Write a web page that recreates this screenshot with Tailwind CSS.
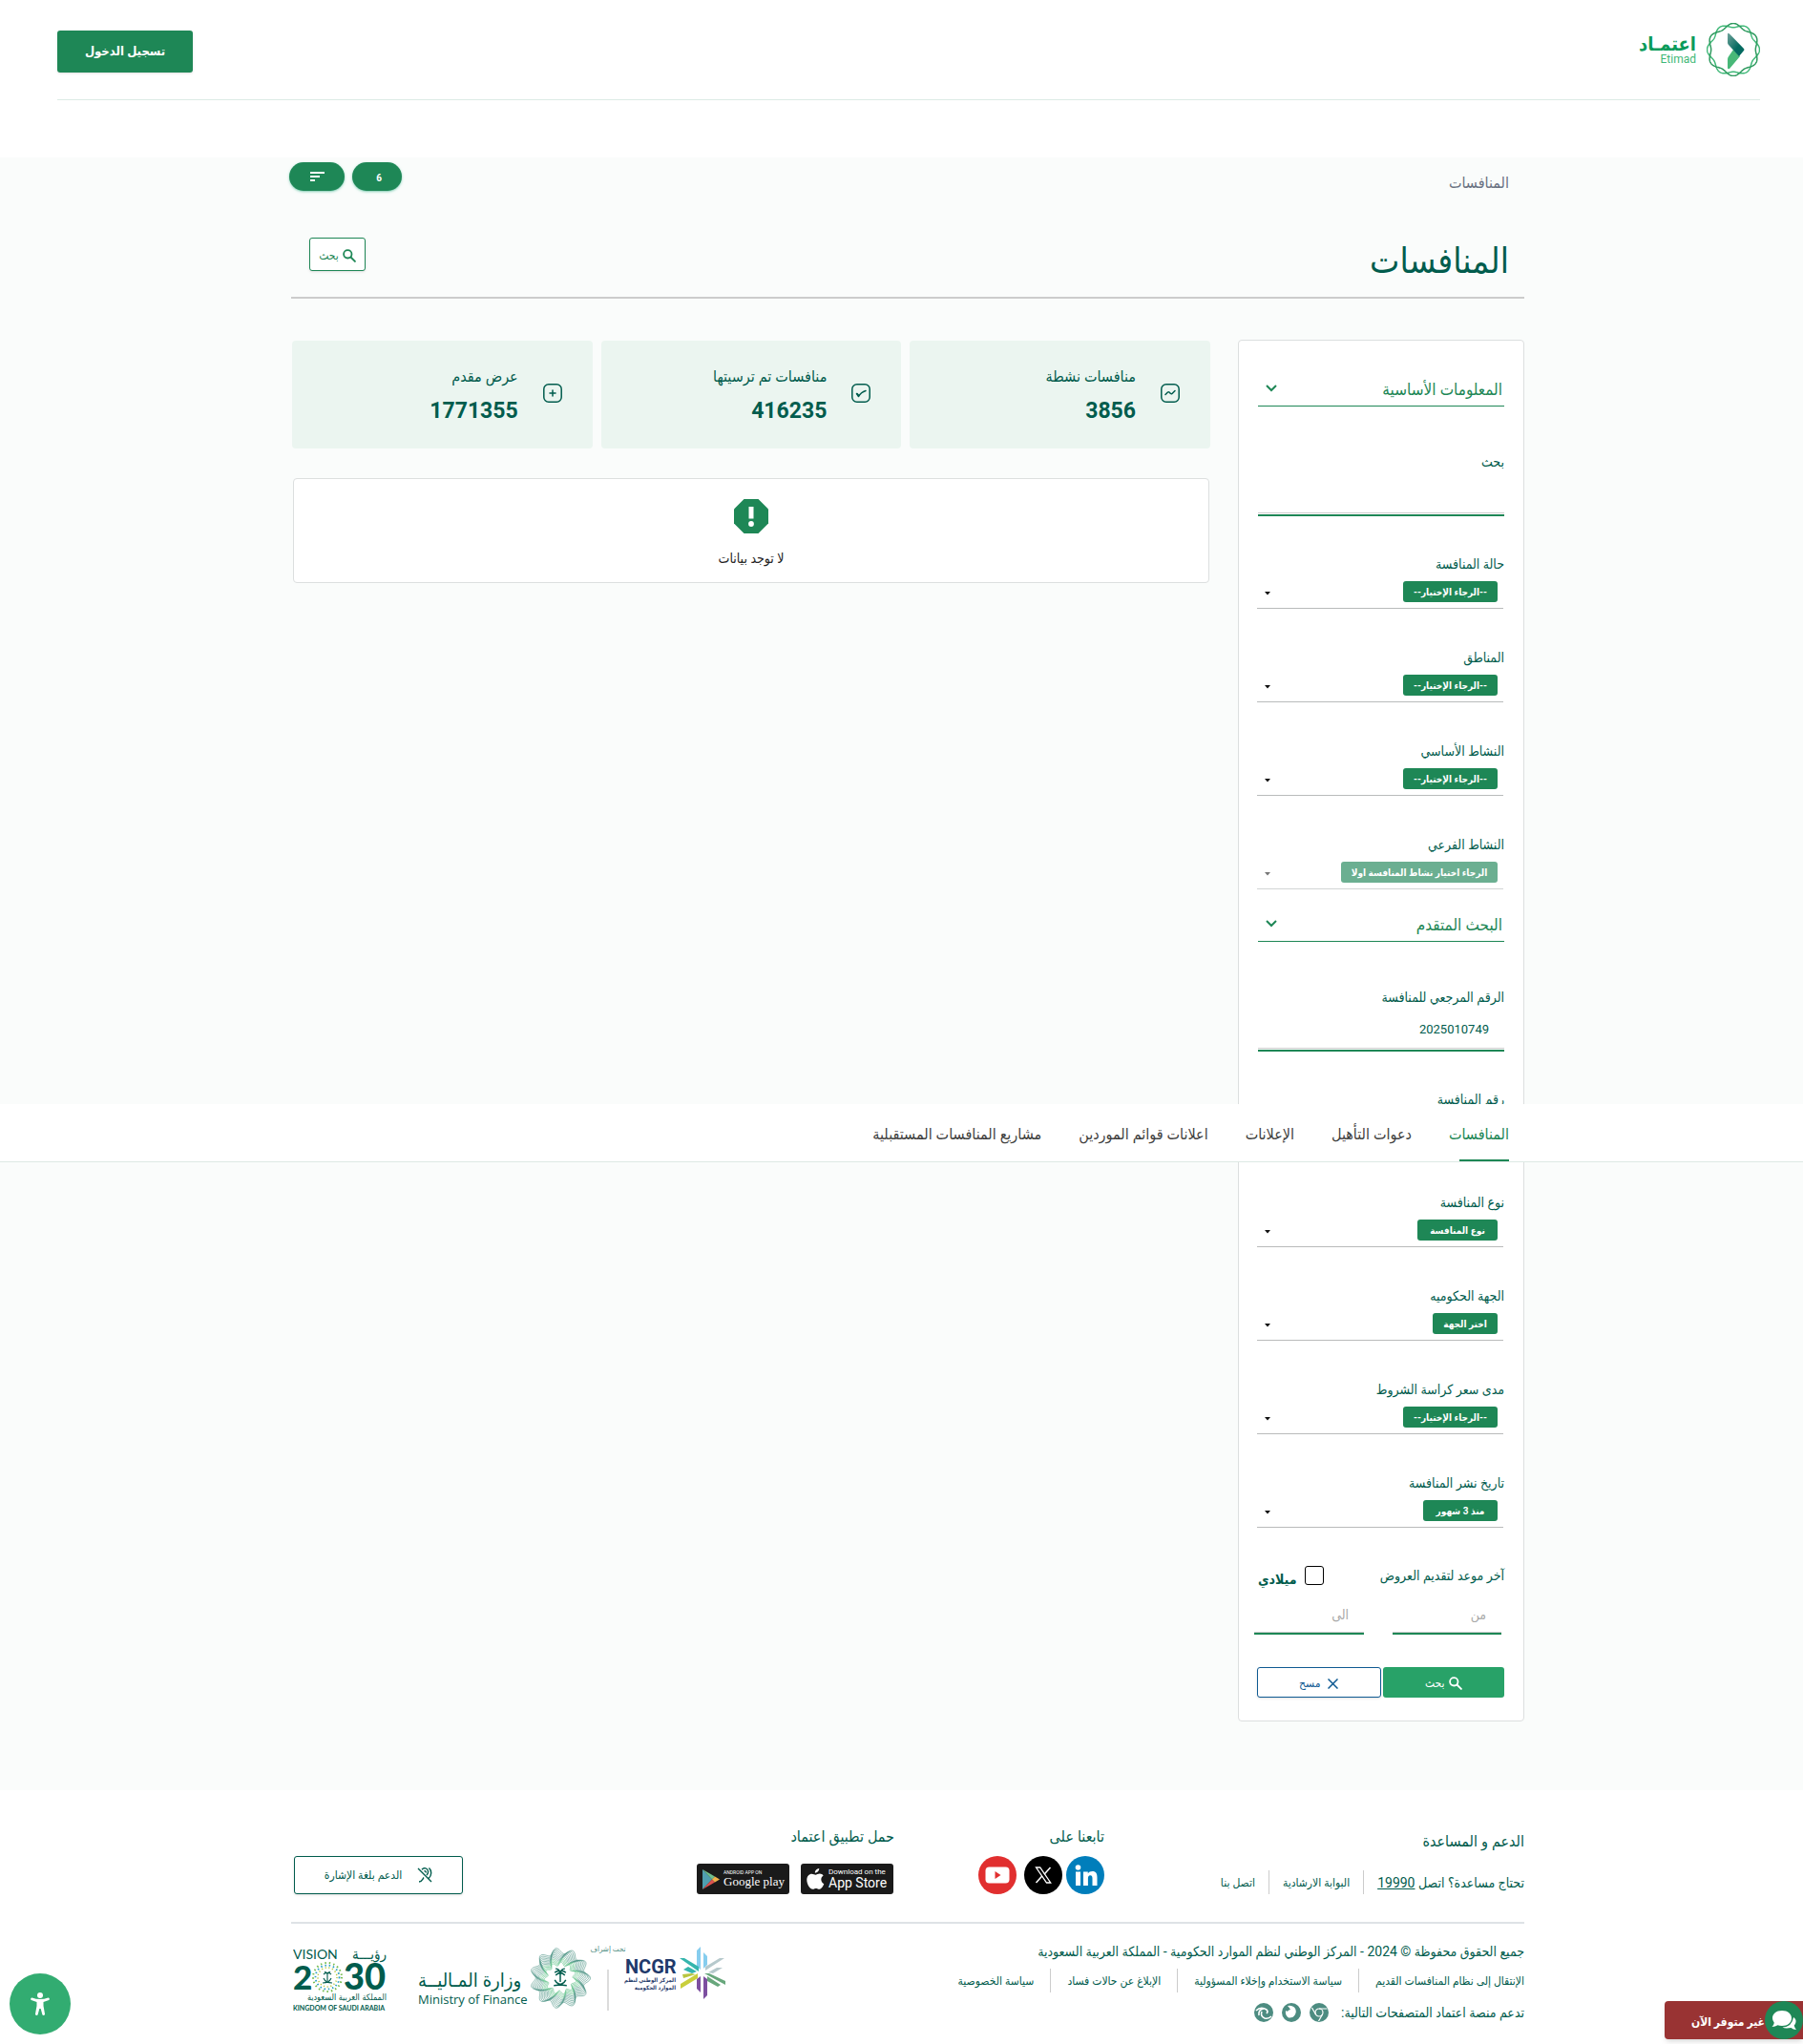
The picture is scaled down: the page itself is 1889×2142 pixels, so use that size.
<!DOCTYPE html>
<html lang="ar" dir="rtl">
<head>
<meta charset="utf-8">
<title>المنافسات - اعتماد</title>
<script src="https://cdn.jsdelivr.net/npm/@tailwindcss/browser@4"></script>
</head>
<body class="relative bg-white text-[#015c4d] font-['Roboto','DejaVu_Sans_Condensed','DejaVu_Sans',sans-serif] text-sm leading-5">

<header class="h-[165px] pr-[45px] pl-[60px]">
  <div class="flex h-[105px] items-start justify-between border-b border-[#dcebe5]">
    <a href="#" class="mt-6 flex items-center gap-[11px]">
      <svg class="size-14" viewBox="-28 -28 56 56" fill="none" aria-hidden="true">
        <path data-n="6" data-r="25.4" data-a="2.1" data-p="0" stroke="#3fb877" stroke-width="1.5"/>
        <path data-n="6" data-r="25.4" data-a="2.1" data-p="3.1416" stroke="#2f9a5f" stroke-width="1.5"/>
        <path d="M-6 19V10q0-2 1.500-3.500L0 0l7 7L-4 20q-2 1-2-1Z" fill="#48b878"/>
        <path d="M-6-16q0-2 2-.5L11-1q1 1 0 2L6 7-5-5q-1-1-1-2.500Z" fill="url(#eg)"/>
        <defs><linearGradient id="eg" x1="0" y1="0" x2="1" y2="1"><stop stop-color="#6fa29a"/><stop offset=".6" stop-color="#046a60"/></linearGradient></defs>
      </svg>
      <span class="flex flex-col items-start font-bold text-[#0b9b5b]">
        <span class="text-[20px] leading-5">اعتمـاد</span>
        <span class="text-xs leading-3 font-normal text-[#3fb877]" dir="ltr">Etimad</span>
      </span>
    </a>
    <button class="mt-8 h-11 w-[142px] rounded-[3px] bg-[#1e8756] text-[13px] font-bold text-white shadow">تسجيل الدخول</button>
  </div>
</header>

<section class="bg-[#fafcfb] pt-[5px] pb-[72px] pl-[13px]">
  <div class="mx-auto max-w-[1292px]">
    <div class="flex h-[30px] items-center justify-between">
      <span class="pt-3.5 pr-4 text-base leading-5 text-gray-500">المنافسات</span>
      <div class="-ml-0.5 flex gap-2 text-white">
        <button class="h-[30px] w-[52px] rounded-full bg-[#1e8756] pt-1 pl-1 text-[10px] font-bold shadow shadow-emerald-600/40">6</button>
        <button class="flex h-[30px] w-[58px] items-center justify-center rounded-full bg-[#1e8756] shadow shadow-emerald-600/40" aria-label="ترتيب">
          <svg class="h-[10px] w-[15px]" viewBox="0 0 15 10" fill="currentColor"><path d="M0 0h15v2H0zM0 4h10v2H0zM0 8h5v2H0z"/></svg>
        </button>
      </div>
    </div>
    <div class="flex h-[113px] items-start justify-between border-b-2 border-[#ccc]">
      <h1 class="mt-[54px] pr-4 text-[37px] leading-10">المنافسات</h1>
      <button class="mt-[49px] ml-[19px] flex h-[35px] w-[59px] items-center justify-center gap-1 rounded-[3px] border border-[#1e8756] bg-white pt-0.5 text-xs text-[#1e8756] shadow">
        <svg class="size-[14px]" viewBox="0 0 14 14" fill="none" stroke="currentColor" stroke-width="1.8"><circle cx="5.3" cy="5.3" r="4.2"/><path d="m8.5 8.5 5 5"/></svg>
        بحث
      </button>
    </div>

    <div class="mt-[43px] flex items-start">
      <aside class="w-[300px] shrink-0 rounded border border-[#dcdfdf] bg-white px-5 pt-[29px] pb-6">
        <form>
          <h2 class="flex h-10 items-center justify-between border-b border-[#1e8756] pt-1 pr-0.5 pl-2 text-[17px] text-[#1e8756]">المعلومات الأساسية
            <svg class="mb-0.5 h-2 w-3" viewBox="0 0 12 8" fill="none" stroke="currentColor" stroke-width="2"><path d="m1 1 5 5 5-5"/></svg></h2>
          <label for="q" class="mt-12 block h-5">بحث</label>
          <div class="border-b-2 border-[#1e8756] pb-px"><input id="q" class="block h-11 w-full border-b border-[#ccc] px-4 outline-none"></div>

          <label for="s1" class="mt-10 block h-5">حالة المنافسة</label>
          <div class="mr-px -ml-px flex items-center justify-between border-b border-[#b9bbbb] pt-2 pr-1.5 pb-1.5 pl-2">
            <select id="s1" class="h-[22px] w-[99px] appearance-none rounded-[3px] bg-[#1e8756] pt-0.5 text-center text-[10px] font-bold text-white"><option>--الرجاء الإختيار--</option></select>
            <svg class="mt-1 h-1 w-1.5" viewBox="0 0 6 4"><path d="M0 0h6L3 3.500z" fill="#111"/></svg>
          </div>
          <label for="s2" class="mt-[41px] block h-5">المناطق</label>
          <div class="mr-px -ml-px flex items-center justify-between border-b border-[#b9bbbb] pt-2 pr-1.5 pb-1.5 pl-2">
            <select id="s2" class="h-[22px] w-[99px] appearance-none rounded-[3px] bg-[#1e8756] pt-0.5 text-center text-[10px] font-bold text-white"><option>--الرجاء الإختيار--</option></select>
            <svg class="mt-1 h-1 w-1.5" viewBox="0 0 6 4"><path d="M0 0h6L3 3.500z" fill="#111"/></svg>
          </div>
          <label for="s3" class="mt-[41px] block h-5">النشاط الأساسي</label>
          <div class="mr-px -ml-px flex items-center justify-between border-b border-[#b9bbbb] pt-2 pr-1.5 pb-1.5 pl-2">
            <select id="s3" class="h-[22px] w-[99px] appearance-none rounded-[3px] bg-[#1e8756] pt-0.5 text-center text-[10px] font-bold text-white"><option>--الرجاء الإختيار--</option></select>
            <svg class="mt-1 h-1 w-1.5" viewBox="0 0 6 4"><path d="M0 0h6L3 3.500z" fill="#111"/></svg>
          </div>
          <label for="s4" class="mt-[41px] block h-5">النشاط الفرعي</label>
          <div class="mr-px -ml-px flex items-center justify-between border-b border-[#d2d4d4] pt-2 pr-1.5 pb-1.5 pl-2">
            <select id="s4" disabled class="h-[22px] w-[164px] appearance-none rounded-[3px] bg-[#6baf91] pt-0.5 text-center text-[10px] font-bold text-white opacity-100"><option>الرجاء اختيار نشاط المنافسة اولا</option></select>
            <svg class="mt-1 h-1 w-1.5" viewBox="0 0 6 4"><path d="M0 0h6L3 3.500z" fill="#777"/></svg>
          </div>

          <h2 class="mt-[15px] flex h-10 items-center justify-between border-b border-[#1e8756] pt-1 pr-0.5 pl-2 text-[17px] text-[#1e8756]">البحث المتقدم
            <svg class="mb-0.5 h-2 w-3" viewBox="0 0 12 8" fill="none" stroke="currentColor" stroke-width="2"><path d="m1 1 5 5 5-5"/></svg></h2>
          <label for="ref" class="mt-12 block h-5">الرقم المرجعي للمنافسة</label>
          <div class="border-b-2 border-[#1e8756] pb-px"><input id="ref" value="2025010749" class="block h-11 w-full border-b border-[#ccc] px-4 pt-1 text-[13px] outline-none"></div>
          <label for="num" class="mt-10 block h-5">رقم المنافسة</label>
          <div class="border-b-2 border-[#1e8756] pb-px"><input id="num" class="block h-11 w-full border-b border-[#ccc] px-4 outline-none"></div>

          <label for="s5" class="mt-[41px] block h-5">نوع المنافسة</label>
          <div class="mr-px -ml-px flex items-center justify-between border-b border-[#b9bbbb] pt-2 pr-1.5 pb-1.5 pl-2">
            <select id="s5" class="h-[22px] w-[84px] appearance-none rounded-[3px] bg-[#1e8756] pt-0.5 text-center text-[10px] font-bold text-white"><option>نوع المنافسة</option></select>
            <svg class="mt-1 h-1 w-1.5" viewBox="0 0 6 4"><path d="M0 0h6L3 3.500z" fill="#111"/></svg>
          </div>
          <label for="s6" class="mt-[41px] block h-5">الجهة الحكوميه</label>
          <div class="mr-px -ml-px flex items-center justify-between border-b border-[#b9bbbb] pt-2 pr-1.5 pb-1.5 pl-2">
            <select id="s6" class="h-[22px] w-[68px] appearance-none rounded-[3px] bg-[#1e8756] pt-0.5 text-center text-[10px] font-bold text-white"><option>اختر الجهة</option></select>
            <svg class="mt-1 h-1 w-1.5" viewBox="0 0 6 4"><path d="M0 0h6L3 3.500z" fill="#111"/></svg>
          </div>
          <label for="s7" class="mt-[41px] block h-5">مدى سعر كراسة الشروط</label>
          <div class="mr-px -ml-px flex items-center justify-between border-b border-[#b9bbbb] pt-2 pr-1.5 pb-1.5 pl-2">
            <select id="s7" class="h-[22px] w-[99px] appearance-none rounded-[3px] bg-[#1e8756] pt-0.5 text-center text-[10px] font-bold text-white"><option>--الرجاء الإختيار--</option></select>
            <svg class="mt-1 h-1 w-1.5" viewBox="0 0 6 4"><path d="M0 0h6L3 3.500z" fill="#111"/></svg>
          </div>
          <label for="s8" class="mt-[41px] block h-5">تاريخ نشر المنافسة</label>
          <div class="mr-px -ml-px flex items-center justify-between border-b border-[#b9bbbb] pt-2 pr-1.5 pb-1.5 pl-2">
            <select id="s8" class="h-[22px] w-[78px] appearance-none rounded-[3px] bg-[#1e8756] pt-0.5 text-center text-[10px] font-bold text-white"><option>منذ 3 شهور</option></select>
            <svg class="mt-1 h-1 w-1.5" viewBox="0 0 6 4"><path d="M0 0h6L3 3.500z" fill="#111"/></svg>
          </div>

          <div class="mt-10 flex h-6 items-start justify-between">
            <label for="from">آخر موعد لتقديم العروض</label>
            <label class="flex items-start gap-2 font-bold"><input type="checkbox" class="size-5 appearance-none rounded-[3px] border border-black bg-white"><span class="pt-1">ميلادي</span></label>
          </div>
          <div class="-ml-1 flex justify-between pr-[3px]">
            <div class="mt-2 w-[114px] border-b-2 border-[#1e8756]"><input id="from" placeholder="من" class="block h-[38px] w-full border-b border-[#ccc] px-4 outline-none placeholder:text-[#a9a9a9]"></div>
            <div class="mt-2 w-[115px] border-b-2 border-[#1e8756]"><input aria-label="الى" placeholder="الى" class="block h-[38px] w-full border-b border-[#ccc] px-4 outline-none placeholder:text-[#a9a9a9]"></div>
          </div>
          <div class="mt-[34px] -ml-px flex gap-0.5 text-xs">
            <button type="button" class="flex h-8 flex-1 items-center justify-center gap-1 rounded-[3px] bg-[#28a268] pt-0.5 text-white">
              <svg class="size-[14px]" viewBox="0 0 14 14" fill="none" stroke="currentColor" stroke-width="1.8"><circle cx="5.300" cy="5.300" r="4.200"/><path d="m8.500 8.500 5 5"/></svg>بحث</button>
            <button type="button" class="flex h-8 flex-1 items-center justify-center gap-2 rounded-[3px] border border-[#0f5a92] bg-white pt-0.5 text-[#0f5a92] shadow-sm">
              <svg class="size-[11px]" viewBox="0 0 11 11" fill="none" stroke="currentColor" stroke-width="1.500"><path d="m.5.5 10 10m0-10-10 10"/></svg>مسح</button>
          </div>
        </form>
      </aside>

      <main class="mt-px mr-[29px] ml-px flex-1">
        <div class="grid grid-cols-3 gap-[9px]">
          <div class="flex h-[113px] items-start gap-[26px] rounded bg-[#ebf5f0] pr-8">
            <svg class="mt-[45px] size-5" viewBox="0 0 20 20" fill="none" stroke="currentColor" stroke-width="1.500" stroke-linecap="round" stroke-linejoin="round"><rect x=".8" y=".8" width="18.400" height="18.400" rx="5"/><path d="m5 11.500 2.500-2.500q.8-.6 1.500 0l1.500 1.500q.8.600 1.500 0L15 7.500"/></svg>
            <div><div class="mt-7 text-base leading-5">منافسات نشطة</div><div class="mt-2 text-[23px] leading-9 font-bold">3856</div></div>
          </div>
          <div class="flex h-[113px] items-start gap-[26px] rounded bg-[#ebf5f0] pr-8">
            <svg class="mt-[45px] size-5" viewBox="0 0 20 20" fill="none" stroke="currentColor" stroke-width="1.500" stroke-linecap="round" stroke-linejoin="round"><rect x=".8" y=".8" width="18.400" height="18.400" rx="5"/><path d="m5.500 10.500 2 3Q10 9 15 7.500"/><path d="m6 10.500 2 2"/></svg>
            <div><div class="mt-7 text-base leading-5">منافسات تم ترسيتها</div><div class="mt-2 text-[23px] leading-9 font-bold">416235</div></div>
          </div>
          <div class="flex h-[113px] items-start gap-[26px] rounded bg-[#ebf5f0] pr-8">
            <svg class="mt-[45px] size-5" viewBox="0 0 20 20" fill="none" stroke="currentColor" stroke-width="1.500" stroke-linecap="round"><rect x=".8" y=".8" width="18.400" height="18.400" rx="5"/><path d="M10 7v6M7 10h6"/></svg>
            <div><div class="mt-7 text-base leading-5">عرض مقدم</div><div class="mt-2 text-[23px] leading-9 font-bold">1771355</div></div>
          </div>
        </div>
        <div class="mx-px mt-[31px] flex h-[110px] flex-col items-center rounded border border-[#dcdfdf] bg-white pt-[21px] text-[#222]">
          <svg class="size-9" viewBox="0 0 36 36"><path d="M10.500 0h15L36 10.500v15L25.500 36h-15L0 25.500v-15z" fill="#1e8756"/><rect x="15.500" y="8" width="5" height="12.500" fill="#fff"/><circle cx="18" cy="26" r="2.900" fill="#fff"/></svg>
          <p class="mt-4">لا توجد بيانات</p>
        </div>
      </main>
    </div>
  </div>
</section>

<nav class="absolute inset-x-0 top-[1157px] h-[61px] border-b border-[#dde9e4] bg-white pl-[13px]">
  <div class="mx-auto flex h-full max-w-[1292px] gap-[39px] pr-4 text-base leading-5 text-[#3f4140]">
    <a href="#" class="relative pt-[22px] text-[#1e8756]">المنافسات<span class="absolute right-0 bottom-0 h-0.5 w-[52px] bg-[#1e8756]"></span></a>
    <a href="#" class="pt-[22px]">دعوات التأهيل</a>
    <a href="#" class="pt-[22px]">الإعلانات</a>
    <a href="#" class="pt-[22px]">اعلانات قوائم الموردين</a>
    <a href="#" class="pt-[22px]">مشاريع المنافسات المستقبلية</a>
  </div>
</nav>

<footer class="pl-[13px]">
  <div class="mx-auto max-w-[1292px]">
    <div class="grid grid-cols-[440px_220px_1fr_auto] border-b-2 border-[#dee2e6] pt-[39px] pb-[29px]">
      <div>
        <h3 class="mt-[5px] text-base leading-5">الدعم و المساعدة</h3>
        <div class="mt-5 flex h-[25px] items-center text-xs">
          <span class="pl-[14px] text-sm">تحتاج مساعدة؟ اتصل <a href="tel:19990" class="underline">19990</a></span>
          <a href="#" class="flex h-full items-center border-r border-[#ccc] px-[14px]">البوابة الارشادية</a>
          <a href="#" class="flex h-full items-center border-r border-[#ccc] px-[14px]">اتصل بنا</a>
        </div>
      </div>
      <div>
        <h3 class="text-base leading-5">تابعنا على</h3>
        <div class="mt-2.5 flex">
          <a href="#" aria-label="LinkedIn"><svg class="size-10" viewBox="0 0 40 40"><circle cx="20" cy="20" r="20" fill="#007ebb"/><g fill="#fff"><circle cx="12.500" cy="12" r="2.800"/><path d="M10 16.500h5V31h-5zM18 16.500h4.800v2c1-1.600 2.700-2.400 4.600-2.400 4 0 5.100 2.600 5.100 6.400V31h-5v-7.500c0-2-.5-3.300-2.200-3.300-1.800 0-2.400 1.400-2.400 3.300V31H18z"/></g></svg></a>
          <a href="#" aria-label="X" class="mr-1"><svg class="size-10" viewBox="0 0 40 40"><circle cx="20" cy="20" r="20" fill="#000"/><path d="M12.500 12h4.200l11 16h-4.200z" fill="none" stroke="#fff" stroke-width="1.300"/><path d="m27.500 12-6.500 7.200M18.800 21 12.500 28" stroke="#fff" stroke-width="1.500"/></svg></a>
          <a href="#" aria-label="YouTube" class="mr-2"><svg class="size-10" viewBox="0 0 40 40"><circle cx="20" cy="20" r="20" fill="#e12f2f"/><rect x="7.500" y="11.500" width="25" height="17" rx="4" fill="#fff"/><path d="m17.500 16 6 4-6 4z" fill="#e12f2f"/></svg></a>
        </div>
      </div>
      <div>
        <h3 class="text-base leading-5">حمل تطبيق اعتماد</h3>
        <div class="mt-[18px] mr-px flex gap-3 text-white">
          <a href="#" dir="ltr" class="flex h-8 w-[97px] items-center gap-1 rounded-[3px] bg-[#1a1a1a] pl-1.5">
            <svg class="h-[22px] w-[19px]" viewBox="0 0 19 22" fill="#fff"><path d="M13.200 0c.2 2.500-2 4.700-4.300 4.700C8.600 2.400 10.900.2 13.200 0zM18.300 16.200C17.200 19 15.400 21.800 13.300 21.800c-1.300 0-1.800-.8-3.400-.8s-2.100.8-3.400.8C3.700 21.800.3 16.700.3 12 .3 8.100 2.800 5.700 5.500 5.700c1.600 0 2.900 1 4 1 1 0 2.500-1.100 4.400-1.100 1.400 0 2.800.7 3.700 1.900-3.500 2.100-2.700 7.200.7 8.700z"/></svg>
            <span class="flex flex-col"><span class="text-[8px] leading-2 whitespace-nowrap">Download on the</span><span class="text-[14px] leading-[14px] whitespace-nowrap">App Store</span></span>
          </a>
          <a href="#" dir="ltr" class="flex h-8 w-[97px] items-center gap-1 rounded-[3px] bg-[#1a1a1a] pl-1.5">
            <svg class="h-[21px] w-[18px]" viewBox="0 0 18 21"><path d="M0 0v21L10 10.500z" fill="#4f9fb0"/><path d="M0 0 13 7.500l-3 3z" fill="#6fbf8b"/><path d="M0 21l13-7.500-3-3z" fill="#d9534f"/><path d="m13 7.500 5 3-5 3-3-3z" fill="#f0b14a"/></svg>
            <span class="flex flex-col"><span class="text-[5px] leading-1.5 whitespace-nowrap">ANDROID APP ON</span><span class="font-['Liberation_Serif',serif] text-[13px] leading-[14px] whitespace-nowrap">Google play</span></span>
          </a>
        </div>
      </div>
      <div class="pt-[30px] pl-[3px]">
        <button class="flex h-10 w-[177px] items-center justify-center gap-4 rounded-[3px] border border-[#015c4d] bg-white text-xs shadow-sm">
          <svg class="size-4" viewBox="0 0 16 16" fill="none" stroke="currentColor" stroke-width="1.400"><path d="M1 1l14 14M5 2.200C7-.2 11 .6 11.500 4c.3 2.200-.8 3-1.500 4.200M7.500 4c1.200-.6 2 .5 1.500 1.500M12.500.5c3 3 3 8-.5 11M2 15c3 0 3.500-2.500 5-4.500"/></svg>
          الدعم بلغة الإشارة</button>
      </div>
    </div>

    <div class="flex items-start justify-between pt-[19px] pb-[23px]">
      <div>
        <p>جميع الحقوق محفوظة © 2024 - المركز الوطني لنظم الموارد الحكومية - المملكة العربية السعودية</p>
        <div class="mt-2 flex h-[25px] text-xs">
          <a href="#" class="flex items-center pl-[17px]">الإنتقال إلى نظام المنافسات القديم</a>
          <a href="#" class="flex items-center border-r border-[#ccc] px-[17px]">سياسة الاستخدام وإخلاء المسؤولية</a>
          <a href="#" class="flex items-center border-r border-[#ccc] px-[17px]">الإبلاغ عن حالات فساد</a>
          <a href="#" class="flex items-center border-r border-[#ccc] px-[17px]">سياسة الخصوصية</a>
        </div>
        <div class="mt-[11px] flex h-5 items-center gap-[9px]"><span class="pl-1">تدعم منصة اعتماد المتصفحات التالية:</span>
          <svg class="size-5" viewBox="0 0 20 20"><circle cx="10" cy="10" r="10" fill="#4d8c81"/><g fill="none" stroke="#fff" stroke-width="1.200"><circle cx="10" cy="10" r="4"/><path d="M10 6h8.500M6.500 12 2.500 5M13.500 12 9.500 19"/></g></svg>
          <svg class="size-5" viewBox="0 0 20 20"><circle cx="10" cy="10" r="10" fill="#4d8c81"/><path d="M6 3q4-1 7 1.500Q16 8 14 12t-7 3.500Q3 13 4 8q1 1 2 .8 1-1.800 3-1.800Q8 5 6 3z" fill="#fff"/></svg>
          <svg class="size-5" viewBox="0 0 20 20"><circle cx="10" cy="10" r="10" fill="#4d8c81"/><path d="M2 8q5-5 11-1 2 2 0 4M8 9q-2 5 3 7 4 1 7-2M5 13Q4 7 10 6" fill="none" stroke="#fff" stroke-width="1.600"/></svg>
        </div>
      </div>

      <div class="flex items-start pl-0.5" dir="ltr">
        <svg class="mt-1 h-[71px] w-[102px]" viewBox="0 0 102 71" role="img" aria-label="رؤية 2030">
          <g fill="#015c4d" font-family="Lato, Roboto, sans-serif">
            <text x="0" y="14" font-size="14">VISION</text>
            <text x="98" y="14" font-size="15" font-family="DejaVu Sans Condensed, DejaVu Sans, sans-serif" direction="rtl">رؤيـــة</text>
            <text x="0" y="46" font-size="35" font-weight="900">2</text>
            <text x="53" y="46" font-size="38" font-weight="900">30</text>
            <text x="98" y="57" font-size="9" font-family="DejaVu Sans Condensed, DejaVu Sans, sans-serif" direction="rtl">المملكة العربية السعودية</text>
            <text x="0" y="68" font-size="7" font-weight="700">KINGDOM OF SAUDI ARABIA</text>
          </g>
          <g transform="translate(36 33)" fill="none">
            <circle r="15" stroke="#74bb4b" stroke-width="2" stroke-dasharray="1.500 3"/><circle r="12.500" stroke="#2a9fc4" stroke-width="1.800" stroke-dasharray="1.500 2.800"/><circle r="10" stroke="#b8c93c" stroke-width="1.500" stroke-dasharray="1.200 2.500"/>
            <path d="M0 4v-8M-4-3q2-2 4-1 2-1 4 1M0-4q-2-2-3-1M0-4q2-2 3-1M-5 6Q2 6 4 1M5 6Q-2 6-4 1" stroke="#015c4d" stroke-width="1.100"/>
          </g>
        </svg>
        <div class="mt-7 ml-[29px] w-[113px]">
          <div class="text-[20px] leading-6 whitespace-nowrap">وزارة المـاليــة</div>
          <div class="font-['Open_Sans',sans-serif] text-[13px] leading-4 whitespace-nowrap">Ministry of Finance</div>
        </div>
        <svg class="mt-[5px] ml-1 h-[66px] w-16" viewBox="-33 -33 66 66" fill="none" stroke-width=".6" aria-hidden="true">
          <g id="rosette"></g>
          <path d="M0 4V-8M-6-6q3-3 6-1 3-2 6 1M0-7q-3-4-5-3M0-7q3-4 5-3M-5-3q3-3 5-3 2 0 5 3M-7 8Q3 8 6 2M7 8Q-3 8-6 2" stroke="#015c4d" stroke-width="1.500"/>
        </svg>
        <div class="flex w-[36px] flex-col items-center text-[8px] leading-2 whitespace-nowrap text-[#4d8c81]"><span class="mt-1">تحت إشراف</span><span class="mt-[17px] h-[43px] w-0.5 bg-[#dcdcdc]"></span></div>
        <div class="mt-4 w-[53px] text-[#1f3a6b]">
          <div class="text-xl leading-5 font-bold">NCGR</div>
          <div class="text-[6px] leading-2 font-bold whitespace-nowrap" dir="rtl">المركز الوطني لنظم<br>الموارد الحكومية</div>
        </div>
        <svg class="mt-[5px] ml-1 h-[55px] w-12" viewBox="0 0 48 55" aria-hidden="true">
          <path d="M18 4l4-4v24l-4-3z" fill="#86cdee"/><path d="M25 6l4 4v9l-4 4z" fill="#86cdee"/>
          <path d="M0 12h5l15 9v5z" fill="#35b5ad"/><path d="M4 24l5-3 9 5-5 2z" fill="#35b5ad"/>
          <path d="M47 12h-5L27 21v4z" fill="#b6c9cc"/><path d="M45 22l-6 0-9 5 5 1z" fill="#b6c9cc"/>
          <path d="M1 44v-5l18-11 0 5z" fill="#c9cf3c"/><path d="M4 33l-1-4 9-1 5 1z" fill="#b9c540"/>
          <path d="M25 55l4-4V34l-4-3z" fill="#7d4fa0"/><path d="M18 44l4 4V31l-4 3z" fill="#7d4fa0"/>
          <path d="M48 40v-4L31 28h-5z" fill="#68a77c"/><path d="M40 42l3-2-14-9v5z" fill="#68a77c"/>
        </svg>
      </div>
    </div>
  </div>
</footer>

<button class="absolute top-[2068px] left-2.5 flex size-16 items-center justify-center rounded-full bg-[#32ac71]" aria-label="إمكانية الوصول">
  <svg class="h-6 w-5" viewBox="0 0 20 24" fill="#fff"><circle cx="10" cy="3" r="3"/><path d="M1.500 5.500Q10 8.500 18.500 5.500a1.300 1.300 0 0 1 .7 2.400L13.500 10v4l1.500 8.500a1.400 1.400 0 0 1-2.700.6L10.700 17H9.300l-1.600 6.100A1.400 1.400 0 0 1 5 22.500L6.500 14v-4L.8 7.900a1.300 1.300 0 0 1 .7-2.400z"/></svg>
</button>
<button class="absolute top-[2097px] right-0 flex h-10 w-[145px] items-center rounded-l bg-[#993333] text-xs font-bold text-white shadow-md">
  <svg class="size-10 shrink-0" viewBox="0 0 40 40"><circle cx="20" cy="20" r="20" fill="#1e8756"/><path d="M18 10c6 0 10 3.500 10 8s-4 8-10 8q-2.500 0-4.500-.8Q11 27 7.500 27q2-2 2.300-4.300Q8 20.500 8 18c0-4.500 4-8 10-8z" fill="#fff"/><path d="M30 17q3 2 2.500 5-.3 2-1.800 3.500.5 2.500 2.300 4.500-3.500 0-5.500-2Q21 29 18.500 27.500 28.500 27 30 17z" fill="#fff"/></svg>
  <span class="pt-1 whitespace-nowrap">غير متوفر الآن</span>
</button>

<script>
  // Closed wavy ring: radius r, wave height a, n waves, phase p.
  function ring(n, r, a, p) {
    let d = '';
    for (let i = 0; i < 240; i++) {
      const t = i / 240 * 2 * Math.PI, q = r + a * Math.cos(n * t + p);
      d += (i ? 'L' : 'M') + (q * Math.cos(t)).toFixed(2) + ' ' + (q * Math.sin(t)).toFixed(2);
    }
    return d + 'Z';
  }
  document.querySelectorAll('path[data-n]').forEach(e => e.setAttribute('d', ring(+e.dataset.n, +e.dataset.r, +e.dataset.a, +e.dataset.p)));
  const g = document.getElementById('rosette');
  for (let i = 0; i < 11; i++) {
    const e = document.createElementNS('http://www.w3.org/2000/svg', 'path');
    e.setAttribute('d', ring(11, 29.5 - i * 1.4, 3 - i * 0.1, i * 0.4));
    e.setAttribute('stroke', i < 7 ? '#3f8a7b' : '#48b878');
    g.appendChild(e);
  }
</script>
</body>
</html>
